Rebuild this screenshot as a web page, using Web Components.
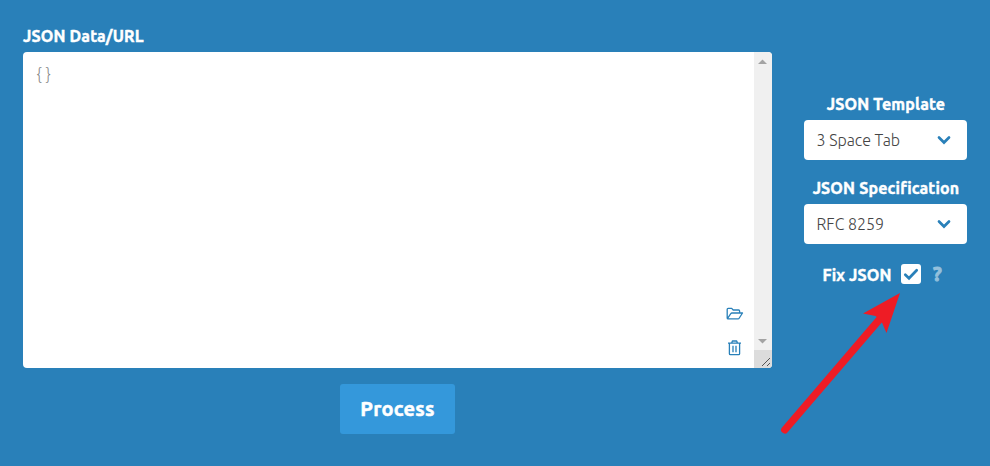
<!DOCTYPE html>
<html lang="en">
<head>
<meta charset="utf-8">
<title>JSON Formatter</title>
<style>
html,body{margin:0;height:466px;overflow:hidden;background:#2980b9}
body{font-family:Ubuntu,"Noto Sans","Open Sans",sans-serif;color:#fff}
</style>
</head>
<body>
<json-tool></json-tool>
<script>
function define(name, html) {
  const t = document.createElement('template');
  t.innerHTML = html;
  customElements.define(name, class extends HTMLElement {
    constructor() {
      super();
      this.attachShadow({mode: 'open'}).append(t.content.cloneNode(true));
    }
  });
}

define('field-label', `<style>
:host{display:block;box-sizing:border-box;height:24px;line-height:25px;font-size:16px;font-weight:700;white-space:nowrap;letter-spacing:.16px;-webkit-text-stroke:.45px #fff}
</style><slot></slot>`);

define('code-input', `<style>
:host{display:flex;height:316px;background:#fff;border-radius:4px;overflow:hidden;color:#888}
.text{flex:1;padding:10px 13.5px;font-size:16px;font-weight:300;line-height:24px;letter-spacing:3.6px}
.tools{display:flex;flex-direction:column;justify-content:flex-end;gap:16px;width:18px;padding:0 10px 11px 0}
svg{display:block}
.bar{width:18px;background:#f0f0f0;display:flex;flex-direction:column;justify-content:space-between}
</style>
<div class="text">{}</div>
<div class="tools">
<svg width="18" height="18" viewBox="0 0 18 18" fill="none" stroke="#2980b9" stroke-width="1.3" stroke-linejoin="round"><path d="M1.2 13.3V4.3Q1.2 3.4 2.1 3.4H5.7L7.2 5H12.6Q13.6 5 13.6 6V7.9M1.4 13.6 4.8 8.7Q5.2 8 6 8H16.5L13.3 13Q12.8 13.9 12 13.9H2.1Q1.2 13.9 1.2 13"/></svg>
<svg width="18" height="18" viewBox="0 0 18 18" fill="none" stroke="#2980b9" stroke-width="1.3" stroke-linejoin="round"><path d="M2 4.2H15M5.7 4 6.4 2H10.7L11.4 4M3.4 4.5V14.7Q3.4 15.6 4.3 15.6H12.7Q13.6 15.6 13.6 14.7V4.5M7 6.8V13.2M10 6.8V13.2"/></svg>
</div>
<div class="bar">
<svg width="18" height="18"><path d="M4 12 8.5 7.5 13 12Z" fill="#a3a3a3"/></svg>
<svg width="18" height="36"><path d="M4 7H13L8.5 11.5Z" fill="#a3a3a3"/><path d="M0 18H18V36H0Z" fill="#dcdcdc"/><path d="M8 34 16 26M13 34 16 31" stroke="#555" stroke-width="1"/></svg>
</div>`);

define('process-button', `<style>
:host{display:flex;align-items:center;justify-content:center;align-self:center;box-sizing:border-box;width:115px;height:50px;margin-top:16px;padding-bottom:1px;background:#3498db;border-radius:3px;font-size:20px;font-weight:700;letter-spacing:.25px;-webkit-text-stroke:.5px #fff}
</style><slot></slot>`);

define('select-box', `<style>
:host{display:flex;align-items:center;justify-content:space-between;height:40px;box-sizing:border-box;padding:0 16px 0 12.5px;background:#fff;border-radius:4px;color:#444;font-size:16px;font-weight:300;line-height:24px;white-space:nowrap}
svg{display:block}
</style><span><slot></slot></span>
<svg width="14" height="10" viewBox="0 0 14 10"><path d="M2 2.5 7 7.5 12 2.5" fill="none" stroke="#2980b9" stroke-width="2.7" stroke-linecap="round"/></svg>`);

define('check-row', `<style>
:host{display:flex;align-items:center;height:20px;margin:20px 0 0 18.5px}
field-label{width:78.5px;height:26px;padding-top:2px}
svg{display:block}
b{margin-left:12px;font-size:20px;line-height:20px;color:#94c0dc;-webkit-text-stroke:1px #94c0dc}
</style><field-label><slot></slot></field-label>
<svg width="20" height="20"><rect width="20" height="20" rx="3" fill="#fff"/><path d="M4.3 10.8 8 14.3 15.7 6.3" fill="none" stroke="#2980b9" stroke-width="2.7" stroke-linecap="round"/></svg>
<b>?</b>`);

define('pointer-arrow', `<style>
:host{position:absolute;left:770px;top:280px}
svg{display:block}
</style><svg width="150" height="170"><path d="M14.8 149.8 109 40" stroke="#ee1c25" stroke-width="7.4" stroke-linecap="round"/><path d="M130 13 93 33.5 105.5 36 111.5 41.5 116.5 53Z" fill="#ee1c25"/></svg>`);

define('json-tool', `<style>
:host{display:flex;gap:32px;box-sizing:border-box;height:466px;padding:24px 23px 0}
.main{display:flex;flex-direction:column;width:749px}
.main field-label{height:28px}
aside{width:163px;padding-top:68px}
aside>field-label{height:28px;padding-left:1px;text-align:center}
select-box+field-label{margin-top:16px}
</style>
<div class="main"><field-label>JSON Data/URL</field-label><code-input></code-input><process-button>Process</process-button></div>
<aside>
<field-label>JSON Template</field-label><select-box>3 Space Tab</select-box>
<field-label>JSON Specification</field-label><select-box>RFC 8259</select-box>
<check-row>Fix JSON</check-row>
</aside>
<pointer-arrow></pointer-arrow>`);
</script>
</body>
</html>
